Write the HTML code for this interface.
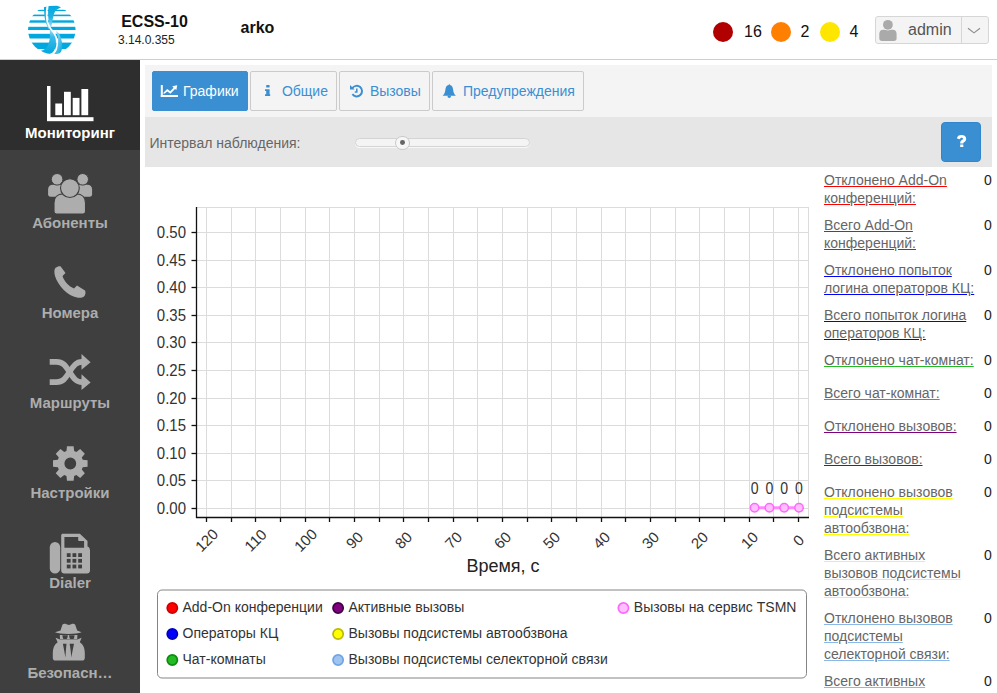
<!DOCTYPE html><html><head><meta charset="utf-8"><style>
*{box-sizing:border-box;margin:0;padding:0}
html,body{width:997px;height:693px;overflow:hidden;background:#fff;font-family:"Liberation Sans",sans-serif;color:#333}
.a{position:absolute;white-space:nowrap;line-height:1}
svg{position:absolute;overflow:visible}
.lbl{position:absolute;left:0;width:140px;text-align:center;font-size:15px;font-weight:bold;color:#adadad;line-height:1;white-space:nowrap}
.tab{position:absolute;top:71px;height:40px;border:1px solid #cbcbcb;background:#f4f4f4;border-radius:2px;color:#3a8fd3;font-size:14px}
.tab.act{background:#3a8fd3;border-color:#3a8fd3;color:#fff}
.tt{position:absolute;top:12px;line-height:1;white-space:nowrap}
.st{position:absolute;left:823px;font-size:14px;line-height:18px;color:#666;white-space:nowrap}
.st span{border-bottom:1px solid}
.sv{position:absolute;left:984px;font-size:14px;color:#222;line-height:1}
.lg{position:absolute;font-size:14px;line-height:1;color:#333;white-space:nowrap}
.dot{position:absolute;width:12px;height:12px;border-radius:50%;border:1.6px solid}
</style></head><body>
<div class="a" style="left:0;top:59px;width:997px;height:1px;background:#cecece"></div>
<svg style="left:0;top:0" width="100" height="60" viewBox="0 0 100 60"><defs><clipPath id="lc"><circle cx="51.8" cy="29.8" r="23.8"/></clipPath><linearGradient id="sg" x1="0" y1="0" x2="1" y2="0"><stop offset="0" stop-color="#00a8df"/><stop offset="0.6" stop-color="#7fd0ef"/><stop offset="1" stop-color="#00a8df"/></linearGradient></defs><g clip-path="url(#lc)" fill="#00a8df"><rect x="20" y="9.8" width="64" height="1.2"/><rect x="20" y="14.6" width="64" height="1.6"/><rect x="20" y="20.3" width="64" height="2.4"/><rect x="20" y="26.8" width="64" height="3.2"/><rect x="20" y="33.8" width="64" height="4.7"/><rect x="20" y="42.6" width="64" height="6.4"/><rect x="20" y="49" width="64" height="8" fill="#fff"/></g><linearGradient id="g1" x1="0" y1="0" x2="0" y2="1"><stop offset="0" stop-color="#00a8df"/><stop offset="0.55" stop-color="#22b2e3"/><stop offset="1" stop-color="#9fdcf3"/></linearGradient><linearGradient id="g2" x1="0" y1="0" x2="1" y2="1"><stop offset="0" stop-color="#c8ecf9"/><stop offset="0.5" stop-color="#5ec5ec"/><stop offset="1" stop-color="#00a8df"/></linearGradient><linearGradient id="g3" x1="0" y1="0" x2="0" y2="1"><stop offset="0" stop-color="#9fdcf3"/><stop offset="0.3" stop-color="#3cbbe8"/><stop offset="1" stop-color="#00a8df"/></linearGradient><path d="M48.6 6 L57 5.7 L61 7.3 L57 9.6 C55 11 53.6 14 53 18 C52.4 22 51.6 25 51.2 27 L49.6 26 C48.6 22 48.1 18 48.1 14 C48.1 10.5 48.3 8 48.6 6 Z" fill="url(#g1)"/><path d="M43.9 7.2 L47 6.5 C46.5 10 46.2 14 46.4 17 C46.7 21 47.8 24.5 50.2 28.5 L48.6 28.8 C46.5 25 45 21 44.6 17 C44.3 13 44 10 43.9 7.2 Z" fill="url(#g1)"/><path d="M49.6 29.5 L52.2 29.5 C54 31.5 55.2 34.5 55.7 38 C56.2 43 55.8 47.5 54.2 50.6 C53 52.5 51.5 53.5 50 53.8 C47 54 43.5 52.5 41 50.8 C43.5 50.2 46.5 48.5 47.9 45.5 C49.5 42 49.9 38 49.9 34 C49.9 32 49.8 30.5 49.6 29.5 Z" fill="url(#g3)"/><path d="M55.5 30.5 C57.5 32 59.2 33.5 60 35.5 C61.5 39 62.3 43 62.2 46.5 C62.1 49.5 61.5 51.5 60 53 C58 54 55.5 54 53.6 53.9 C55.6 52 57 49.5 57.6 46.5 C58.3 43 58.3 39.5 57.8 36.5 C57.4 34.2 56.6 32.2 55.5 30.5 Z" fill="url(#g2)"/><path d="M47.3 6.2 C46.6 10 46.3 14 46.8 18.5 C47.3 23 49 27 52 30.5 C55 34 56.8 37.5 57.2 42 C57.6 47 55.7 51 53 54.2" fill="none" stroke="#fff" stroke-width="1.7"/></svg>
<div class="a" style="left:121.2px;top:13.5px;font-size:16px;font-weight:bold;color:#111">ECSS-10</div>
<div class="a" style="left:118px;top:33.5px;font-size:12px;color:#222">3.14.0.355</div>
<div class="a" style="left:240.5px;top:19.5px;font-size:16px;font-weight:bold;color:#111">arko</div>
<div class="a" style="left:713px;top:22px;width:20px;height:20px;border-radius:50%;background:#b00000"></div>
<div class="a" style="left:771px;top:22px;width:20px;height:20px;border-radius:50%;background:#ff7f00"></div>
<div class="a" style="left:820px;top:22px;width:20px;height:20px;border-radius:50%;background:#ffe600"></div>
<div class="a" style="left:744px;top:23.5px;font-size:16px;color:#111">16</div>
<div class="a" style="left:800.5px;top:23.5px;font-size:16px;color:#111">2</div>
<div class="a" style="left:849.5px;top:23.5px;font-size:16px;color:#111">4</div>
<div class="a" style="left:875px;top:16px;width:114px;height:28px;border:1px solid #d6d6d6;border-radius:3px;background:#f4f4f4"></div>
<div class="a" style="left:961px;top:17px;width:1px;height:26px;background:#d6d6d6"></div>
<svg style="left:879px;top:19px" width="18" height="23" viewBox="0 0 18 23"><path d="M0.3 15 C0.3 12.3 1.5 10.7 4 10.7 L13.9 10.7 C16.4 10.7 17.6 12.3 17.6 15 L17.6 19.5 C17.6 21 16.6 21.9 15 21.9 L2.9 21.9 C1.3 21.9 0.3 21 0.3 19.5 Z" fill="#aaa"/><circle cx="8.9" cy="5.8" r="5.6" fill="#f4f4f4"/><circle cx="8.9" cy="5.8" r="4.9" fill="#aaa"/></svg>
<div class="a" style="left:908px;top:22px;font-size:16px;color:#555">admin</div>
<svg style="left:967px;top:27px" width="14" height="8" viewBox="0 0 14 8"><path d="M1 1.2 L7 5.9 L13 1.2" fill="none" stroke="#8c8c8c" stroke-width="1.1"/></svg>
<div class="a" style="left:0;top:60px;width:140px;height:633px;background:#3f3f3f"></div>
<div class="a" style="left:0;top:60px;width:140px;height:90px;background:#2e2e2e"></div>
<div class="lbl" style="top:125.4px;color:#fff">Мониторинг</div>
<div class="lbl" style="top:215.4px;color:#adadad">Абоненты</div>
<div class="lbl" style="top:305.4px;color:#adadad">Номера</div>
<div class="lbl" style="top:395.4px;color:#adadad">Маршруты</div>
<div class="lbl" style="top:485.4px;color:#adadad">Настройки</div>
<div class="lbl" style="top:575.4px;color:#adadad">Dialer</div>
<div class="lbl" style="top:665.4px;color:#adadad">Безопасн…</div>
<svg style="left:0;top:60px" width="140" height="90" viewBox="0 0 140 90"><rect x="47" y="26" width="3.5" height="35" fill="#fff"/><rect x="47" y="57.2" width="46.5" height="4" fill="#fff"/><rect x="55.3" y="43.5" width="6.8" height="11.7" fill="#fff"/><rect x="64" y="31.8" width="6.8" height="23.4" fill="#fff"/><rect x="72.7" y="37.9" width="6.8" height="17.3" fill="#fff"/><rect x="81.4" y="29" width="6.8" height="26.2" fill="#fff"/></svg>
<svg style="left:0;top:150px" width="140" height="90" viewBox="0 0 140 90" fill="#adadad"><path d="M48.1 43.5 L48.1 39.5 C48.1 36.5 49.8 34.7 53 34.7 L63 34.7 L63 46.7 L50.5 46.7 C49 46.7 48.1 45.8 48.1 44.3 Z"/><path d="M92.1 43.5 L92.1 39.5 C92.1 36.5 90.4 34.7 87.2 34.7 L77 34.7 L77 46.7 L89.7 46.7 C91.2 46.7 92.1 45.8 92.1 44.3 Z"/><circle cx="57.1" cy="29.3" r="5.8" stroke="#3f3f3f" stroke-width="1"/><circle cx="82.7" cy="29.3" r="5.8" stroke="#3f3f3f" stroke-width="1"/><path d="M54 61.5 L54 53 C54 47.5 57.5 43.9 63 43.9 L76.5 43.9 C82 43.9 85.5 47.5 85.5 53 L85.5 61.5 C85.5 63.2 84.5 64 83 64 L56.5 64 C55 64 54 63.2 54 61.5 Z" stroke="#3f3f3f" stroke-width="1.1"/><circle cx="69.9" cy="38.1" r="9.4" stroke="#3f3f3f" stroke-width="1.1"/></svg>
<svg style="left:0;top:240px" width="140" height="90" viewBox="0 0 140 90" fill="#adadad"><path d="M60.5 26.3 L65.5 33 L62.5 36 C64 41 69 46.5 74 48.5 L77 45.5 L85 50.5 C86 52 85.5 55 84 56.5 C82.5 57.8 80 58 77 57.6 C68 56 58 46 55 36 C54 32 54.2 29 55.6 27.8 C57 26.6 59 26 60.5 26.3 Z"/></svg>
<svg style="left:0;top:330px" width="140" height="90" viewBox="0 0 140 90"><path d="M49.7 31.9 L56.5 31.9 C63.5 31.9 65.5 36 69.5 42 C73.5 48 76 52.1 82 52.1 L83 52.1" fill="none" stroke="#adadad" stroke-width="5.6"/><path d="M49.7 52.1 L56.5 52.1 C63.5 52.1 65.5 48 69.5 42 C73.5 36 76 31.9 82 31.9 L83 31.9" fill="none" stroke="#adadad" stroke-width="5.6"/><path d="M81.5 23.9 L90.6 32.2 L81.5 39.7 Z" fill="#adadad"/><path d="M81.5 44.3 L90.6 52.4 L81.5 60 Z" fill="#adadad"/></svg>
<svg style="left:0;top:420px" width="140" height="90" viewBox="0 0 140 90"><path fill-rule="evenodd" fill="#adadad" d="M66.46 31.08 L66.98 26.22 L73.62 26.22 L74.14 31.08 L76.37 32.00 L80.17 28.93 L84.87 33.63 L81.80 37.43 L82.72 39.66 L87.58 40.18 L87.58 46.82 L82.72 47.34 L81.80 49.57 L84.87 53.37 L80.17 58.07 L76.37 55.00 L74.14 55.92 L73.62 60.78 L66.98 60.78 L66.46 55.92 L64.23 55.00 L60.43 58.07 L55.73 53.37 L58.80 49.57 L57.88 47.34 L53.02 46.82 L53.02 40.18 L57.88 39.66 L58.80 37.43 L55.73 33.63 L60.43 28.93 L64.23 32.00 Z M64.40 43.50 a5.9 5.9 0 1 0 11.8 0 a5.9 5.9 0 1 0 -11.8 0 Z"/></svg>
<svg style="left:0;top:510px" width="140" height="90" viewBox="0 0 140 90" fill="#adadad"><rect x="49.8" y="32.1" width="10.4" height="31.5" rx="5.2"/><path fill-rule="evenodd" d="M62.7 23.8 L79.9 23.8 L87.5 31.1 L87.5 36.4 C89.2 37 90 38.5 90 40.5 L90 60.6 C90 62.3 88.7 63.6 87 63.6 L64.2 63.6 C62.5 63.6 61.2 62.3 61.2 60.6 L61.2 25.3 C61.2 24.5 61.9 23.8 62.7 23.8 Z M64.4 26.9 L78.2 26.9 L78.2 30 C78.2 30.7 78.6 31.1 79.3 31.1 L84.1 31.1 L84.1 37.7 L64.4 37.7 Z"/><rect x="66.8" y="43.2" width="3.8" height="3.8" fill="#3f3f3f"/><rect x="72.5" y="43.2" width="3.8" height="3.8" fill="#3f3f3f"/><rect x="78.2" y="43.2" width="3.8" height="3.8" fill="#3f3f3f"/><rect x="66.8" y="48.9" width="3.8" height="3.8" fill="#3f3f3f"/><rect x="72.5" y="48.9" width="3.8" height="3.8" fill="#3f3f3f"/><rect x="78.2" y="48.9" width="3.8" height="3.8" fill="#3f3f3f"/><rect x="66.8" y="54.6" width="3.8" height="3.8" fill="#3f3f3f"/><rect x="72.5" y="54.6" width="3.8" height="3.8" fill="#3f3f3f"/><rect x="78.2" y="54.6" width="3.8" height="3.8" fill="#3f3f3f"/></svg>
<svg style="left:0;top:600px" width="140" height="90" viewBox="0 0 140 90" fill="#adadad"><path d="M55 32.2 L60.5 30.6 L62.4 24.8 C63.2 23.6 64.8 23.5 66.5 24.2 L68.8 25 L71.2 24.2 C72.9 23.5 74.5 23.6 75.2 24.8 L77.2 30.6 L81.6 32.2 C79 33.4 74 33.9 68.3 33.9 C62.5 33.9 57.6 33.4 55 32.2 Z"/><path d="M59.8 34.9 L77.4 34.9 L77.2 39.2 L60 39.2 Z"/><path d="M62.3 35.2 L67.9 35.2 L67.2 38.4 C66.6 39.1 63.6 39.1 63 38.4 Z M69 35.2 L74.6 35.2 L74 38.4 C73.4 39.1 70.4 39.1 69.7 38.4 Z" fill="#3f3f3f"/><path d="M55.6 37.8 L60 39.6 L77.2 39.6 L81.6 37.8 L79.8 42.2 C83.4 44.5 84.8 48.5 84.8 53 L84.8 58 C84.8 59.6 83.6 60.6 82 60.6 L55.6 60.6 C54 60.6 52.8 59.6 52.8 58 L52.8 53 C52.8 48.5 54.2 44.5 57.6 42.2 Z"/><path d="M62.9 43.8 L66.5 43.8 C66.1 47.5 65.8 52.5 65.4 57.4 C64.6 52.5 63.6 47.5 62.9 43.8 Z M69.6 43.8 L74 43.8 C73.3 47.5 72.2 52.5 71.3 57.4 C71 52.5 70.3 47.5 69.6 43.8 Z" fill="#3f3f3f"/></svg>
<div class="a" style="left:145px;top:65px;width:847px;height:52px;background:#f4f4f4"></div>
<div class="a" style="left:145px;top:117px;width:847px;height:50px;background:#e6e6e6"></div>
<div class="tab act" style="left:152px;width:96px"><div class="tt" style="left:30.0px">Графики</div></div>
<div class="tab " style="left:250px;width:87px"><div class="tt" style="left:30.9px">Общие</div></div>
<div class="tab " style="left:339px;width:91px"><div class="tt" style="left:29.9px">Вызовы</div></div>
<div class="tab " style="left:432px;width:152px"><div class="tt" style="left:29.9px">Предупреждения</div></div>
<svg style="left:160px;top:84px" width="20" height="14" viewBox="0 0 20 14" fill="#fff"><rect x="0.8" y="1" width="2" height="12"/><rect x="0.8" y="11" width="17.2" height="2"/><path d="M3.6 10.2 L3.6 8.4 L7.3 5 L10.2 7.3 L13.6 3.8 L12.2 2.2 L17.2 1.2 L16.4 6 L15 4.9 L10.4 9.7 L7.4 7.5 Z"/></svg>
<svg style="left:264px;top:84px" width="8" height="13" viewBox="0 0 8 13" fill="#3a8fd3"><rect x="2.2" y="1" width="3.4" height="2.6" rx="0.6"/><path d="M1 5.3 L5.6 5.3 L5.6 10.3 L6.2 10.3 L6.2 12 L1 12 L1 10.3 L2.2 10.3 L2.2 7 L1 7 Z"/></svg>
<svg style="left:349px;top:84px" width="15" height="14" viewBox="0 0 15 14"><path d="M3.4 10.2 A5.3 5.3 0 1 0 3.3 4.2" fill="none" stroke="#3a8fd3" stroke-width="2"/><path d="M1 1 L1 5.6 L5.6 5.6 Z" fill="#3a8fd3"/><path d="M7.8 4.6 L7.8 7.9 L5.8 7.9" fill="none" stroke="#3a8fd3" stroke-width="1.5"/></svg>
<svg style="left:442px;top:83px" width="15" height="16" viewBox="0 0 15 16" fill="#3a8fd3"><path d="M7.25 0.8 L7.9 1.9 C10 2.4 10.9 4 11.1 6.5 C11.4 9.8 12.4 11.4 13.9 12.8 L0.6 12.8 C2.1 11.4 3.1 9.8 3.4 6.5 C3.6 4 4.5 2.4 6.6 1.9 Z"/><path d="M5.6 12.5 L8.9 12.5 L8.9 13.5 C8.9 14.5 8.2 14.9 7.25 14.9 C6.3 14.9 5.6 14.5 5.6 13.5 Z"/></svg>
<div class="a" style="left:149.5px;top:136.2px;font-size:14px;color:#666">Интервал наблюдения:</div>
<div class="a" style="left:355px;top:138px;width:175px;height:9px;border:1px solid #d4d4d4;border-radius:5px;background:#f4f4f4;box-shadow:0 1px 0 rgba(255,255,255,0.7)"></div>
<div class="a" style="left:395px;top:135.5px;width:14.5px;height:14.5px;border:1px solid #c9c9c9;border-radius:50%;background:#f7f7f7"></div>
<div class="a" style="left:400px;top:140.2px;width:4.8px;height:4.8px;border-radius:50%;background:#666"></div>
<div class="a" style="left:941px;top:122px;width:40px;height:40px;border:1px solid #2f86cd;border-radius:4px;background:#3a8fd3"></div>
<svg style="left:955px;top:133px" width="14" height="16" viewBox="0 0 14 16" fill="#fff"><path d="M2 5.5 C2 3 4 2 6.5 2 C9.5 2 11.2 3.6 11.2 6 C11.2 8.2 9.6 8.8 8.7 9.4 C8.3 9.7 8.3 10 8.3 10.4 L5.2 10.4 C5.1 8.8 5.6 8 6.6 7.3 C7.6 6.6 8 6.4 8 5.8 C8 5.1 7.4 4.7 6.6 4.7 C5.6 4.7 5.1 5.2 4.9 6.3 Z M5.2 11.5 L8.3 11.5 L8.3 14 L5.2 14 Z"/></svg>
<svg style="left:0;top:0" width="997" height="693" viewBox="0 0 997 693"><line x1="196" y1="508.5" x2="809" y2="508.5" stroke="#dcdcdc" stroke-width="1"/><line x1="196" y1="480.5" x2="809" y2="480.5" stroke="#dcdcdc" stroke-width="1"/><line x1="196" y1="453.5" x2="809" y2="453.5" stroke="#dcdcdc" stroke-width="1"/><line x1="196" y1="425.5" x2="809" y2="425.5" stroke="#dcdcdc" stroke-width="1"/><line x1="196" y1="398.5" x2="809" y2="398.5" stroke="#dcdcdc" stroke-width="1"/><line x1="196" y1="370.5" x2="809" y2="370.5" stroke="#dcdcdc" stroke-width="1"/><line x1="196" y1="342.5" x2="809" y2="342.5" stroke="#dcdcdc" stroke-width="1"/><line x1="196" y1="315.5" x2="809" y2="315.5" stroke="#dcdcdc" stroke-width="1"/><line x1="196" y1="287.5" x2="809" y2="287.5" stroke="#dcdcdc" stroke-width="1"/><line x1="196" y1="260.5" x2="809" y2="260.5" stroke="#dcdcdc" stroke-width="1"/><line x1="196" y1="232.5" x2="809" y2="232.5" stroke="#dcdcdc" stroke-width="1"/><line x1="196" y1="207.5" x2="809" y2="207.5" stroke="#dcdcdc" stroke-width="1"/><line x1="206.5" y1="207" x2="206.5" y2="517" stroke="#dcdcdc" stroke-width="1"/><line x1="231.5" y1="207" x2="231.5" y2="517" stroke="#dcdcdc" stroke-width="1"/><line x1="255.5" y1="207" x2="255.5" y2="517" stroke="#dcdcdc" stroke-width="1"/><line x1="280.5" y1="207" x2="280.5" y2="517" stroke="#dcdcdc" stroke-width="1"/><line x1="305.5" y1="207" x2="305.5" y2="517" stroke="#dcdcdc" stroke-width="1"/><line x1="329.5" y1="207" x2="329.5" y2="517" stroke="#dcdcdc" stroke-width="1"/><line x1="354.5" y1="207" x2="354.5" y2="517" stroke="#dcdcdc" stroke-width="1"/><line x1="379.5" y1="207" x2="379.5" y2="517" stroke="#dcdcdc" stroke-width="1"/><line x1="403.5" y1="207" x2="403.5" y2="517" stroke="#dcdcdc" stroke-width="1"/><line x1="428.5" y1="207" x2="428.5" y2="517" stroke="#dcdcdc" stroke-width="1"/><line x1="453.5" y1="207" x2="453.5" y2="517" stroke="#dcdcdc" stroke-width="1"/><line x1="477.5" y1="207" x2="477.5" y2="517" stroke="#dcdcdc" stroke-width="1"/><line x1="502.5" y1="207" x2="502.5" y2="517" stroke="#dcdcdc" stroke-width="1"/><line x1="527.5" y1="207" x2="527.5" y2="517" stroke="#dcdcdc" stroke-width="1"/><line x1="551.5" y1="207" x2="551.5" y2="517" stroke="#dcdcdc" stroke-width="1"/><line x1="576.5" y1="207" x2="576.5" y2="517" stroke="#dcdcdc" stroke-width="1"/><line x1="601.5" y1="207" x2="601.5" y2="517" stroke="#dcdcdc" stroke-width="1"/><line x1="625.5" y1="207" x2="625.5" y2="517" stroke="#dcdcdc" stroke-width="1"/><line x1="650.5" y1="207" x2="650.5" y2="517" stroke="#dcdcdc" stroke-width="1"/><line x1="675.5" y1="207" x2="675.5" y2="517" stroke="#dcdcdc" stroke-width="1"/><line x1="699.5" y1="207" x2="699.5" y2="517" stroke="#dcdcdc" stroke-width="1"/><line x1="724.5" y1="207" x2="724.5" y2="517" stroke="#dcdcdc" stroke-width="1"/><line x1="749.5" y1="207" x2="749.5" y2="517" stroke="#dcdcdc" stroke-width="1"/><line x1="773.5" y1="207" x2="773.5" y2="517" stroke="#dcdcdc" stroke-width="1"/><line x1="798.5" y1="207" x2="798.5" y2="517" stroke="#dcdcdc" stroke-width="1"/><line x1="808.5" y1="207" x2="808.5" y2="517" stroke="#dcdcdc" stroke-width="1"/><line x1="196.5" y1="207" x2="196.5" y2="518" stroke="#111" stroke-width="1.3"/><line x1="196" y1="517.5" x2="809" y2="517.5" stroke="#111" stroke-width="1.3"/><line x1="191.5" y1="508.5" x2="196.5" y2="508.5" stroke="#111" stroke-width="1.3"/><text transform="translate(186,513.8) scale(1,1.1)" font-size="15" text-anchor="end" fill="#333" font-family="Liberation Sans">0.00</text><line x1="191.5" y1="480.5" x2="196.5" y2="480.5" stroke="#111" stroke-width="1.3"/><text transform="translate(186,485.8) scale(1,1.1)" font-size="15" text-anchor="end" fill="#333" font-family="Liberation Sans">0.05</text><line x1="191.5" y1="453.5" x2="196.5" y2="453.5" stroke="#111" stroke-width="1.3"/><text transform="translate(186,458.8) scale(1,1.1)" font-size="15" text-anchor="end" fill="#333" font-family="Liberation Sans">0.10</text><line x1="191.5" y1="425.5" x2="196.5" y2="425.5" stroke="#111" stroke-width="1.3"/><text transform="translate(186,430.8) scale(1,1.1)" font-size="15" text-anchor="end" fill="#333" font-family="Liberation Sans">0.15</text><line x1="191.5" y1="398.5" x2="196.5" y2="398.5" stroke="#111" stroke-width="1.3"/><text transform="translate(186,403.8) scale(1,1.1)" font-size="15" text-anchor="end" fill="#333" font-family="Liberation Sans">0.20</text><line x1="191.5" y1="370.5" x2="196.5" y2="370.5" stroke="#111" stroke-width="1.3"/><text transform="translate(186,375.8) scale(1,1.1)" font-size="15" text-anchor="end" fill="#333" font-family="Liberation Sans">0.25</text><line x1="191.5" y1="342.5" x2="196.5" y2="342.5" stroke="#111" stroke-width="1.3"/><text transform="translate(186,347.8) scale(1,1.1)" font-size="15" text-anchor="end" fill="#333" font-family="Liberation Sans">0.30</text><line x1="191.5" y1="315.5" x2="196.5" y2="315.5" stroke="#111" stroke-width="1.3"/><text transform="translate(186,320.8) scale(1,1.1)" font-size="15" text-anchor="end" fill="#333" font-family="Liberation Sans">0.35</text><line x1="191.5" y1="287.5" x2="196.5" y2="287.5" stroke="#111" stroke-width="1.3"/><text transform="translate(186,292.8) scale(1,1.1)" font-size="15" text-anchor="end" fill="#333" font-family="Liberation Sans">0.40</text><line x1="191.5" y1="260.5" x2="196.5" y2="260.5" stroke="#111" stroke-width="1.3"/><text transform="translate(186,265.8) scale(1,1.1)" font-size="15" text-anchor="end" fill="#333" font-family="Liberation Sans">0.45</text><line x1="191.5" y1="232.5" x2="196.5" y2="232.5" stroke="#111" stroke-width="1.3"/><text transform="translate(186,237.8) scale(1,1.1)" font-size="15" text-anchor="end" fill="#333" font-family="Liberation Sans">0.50</text><line x1="206.5" y1="517" x2="206.5" y2="522" stroke="#111" stroke-width="1.3"/><text transform="translate(206.5,540.2) rotate(-45)" y="5.3" font-size="15" text-anchor="middle" fill="#333" font-family="Liberation Sans">120</text><line x1="231.5" y1="517" x2="231.5" y2="522" stroke="#111" stroke-width="1.3"/><line x1="255.5" y1="517" x2="255.5" y2="522" stroke="#111" stroke-width="1.3"/><text transform="translate(255.5,540.2) rotate(-45)" y="5.3" font-size="15" text-anchor="middle" fill="#333" font-family="Liberation Sans">110</text><line x1="280.5" y1="517" x2="280.5" y2="522" stroke="#111" stroke-width="1.3"/><line x1="305.5" y1="517" x2="305.5" y2="522" stroke="#111" stroke-width="1.3"/><text transform="translate(305.5,540.2) rotate(-45)" y="5.3" font-size="15" text-anchor="middle" fill="#333" font-family="Liberation Sans">100</text><line x1="329.5" y1="517" x2="329.5" y2="522" stroke="#111" stroke-width="1.3"/><line x1="354.5" y1="517" x2="354.5" y2="522" stroke="#111" stroke-width="1.3"/><text transform="translate(354.5,540.2) rotate(-45)" y="5.3" font-size="15" text-anchor="middle" fill="#333" font-family="Liberation Sans">90</text><line x1="379.5" y1="517" x2="379.5" y2="522" stroke="#111" stroke-width="1.3"/><line x1="403.5" y1="517" x2="403.5" y2="522" stroke="#111" stroke-width="1.3"/><text transform="translate(403.5,540.2) rotate(-45)" y="5.3" font-size="15" text-anchor="middle" fill="#333" font-family="Liberation Sans">80</text><line x1="428.5" y1="517" x2="428.5" y2="522" stroke="#111" stroke-width="1.3"/><line x1="453.5" y1="517" x2="453.5" y2="522" stroke="#111" stroke-width="1.3"/><text transform="translate(453.5,540.2) rotate(-45)" y="5.3" font-size="15" text-anchor="middle" fill="#333" font-family="Liberation Sans">70</text><line x1="477.5" y1="517" x2="477.5" y2="522" stroke="#111" stroke-width="1.3"/><line x1="502.5" y1="517" x2="502.5" y2="522" stroke="#111" stroke-width="1.3"/><text transform="translate(502.5,540.2) rotate(-45)" y="5.3" font-size="15" text-anchor="middle" fill="#333" font-family="Liberation Sans">60</text><line x1="527.5" y1="517" x2="527.5" y2="522" stroke="#111" stroke-width="1.3"/><line x1="551.5" y1="517" x2="551.5" y2="522" stroke="#111" stroke-width="1.3"/><text transform="translate(551.5,540.2) rotate(-45)" y="5.3" font-size="15" text-anchor="middle" fill="#333" font-family="Liberation Sans">50</text><line x1="576.5" y1="517" x2="576.5" y2="522" stroke="#111" stroke-width="1.3"/><line x1="601.5" y1="517" x2="601.5" y2="522" stroke="#111" stroke-width="1.3"/><text transform="translate(601.5,540.2) rotate(-45)" y="5.3" font-size="15" text-anchor="middle" fill="#333" font-family="Liberation Sans">40</text><line x1="625.5" y1="517" x2="625.5" y2="522" stroke="#111" stroke-width="1.3"/><line x1="650.5" y1="517" x2="650.5" y2="522" stroke="#111" stroke-width="1.3"/><text transform="translate(650.5,540.2) rotate(-45)" y="5.3" font-size="15" text-anchor="middle" fill="#333" font-family="Liberation Sans">30</text><line x1="675.5" y1="517" x2="675.5" y2="522" stroke="#111" stroke-width="1.3"/><line x1="699.5" y1="517" x2="699.5" y2="522" stroke="#111" stroke-width="1.3"/><text transform="translate(699.5,540.2) rotate(-45)" y="5.3" font-size="15" text-anchor="middle" fill="#333" font-family="Liberation Sans">20</text><line x1="724.5" y1="517" x2="724.5" y2="522" stroke="#111" stroke-width="1.3"/><line x1="749.5" y1="517" x2="749.5" y2="522" stroke="#111" stroke-width="1.3"/><text transform="translate(749.5,540.2) rotate(-45)" y="5.3" font-size="15" text-anchor="middle" fill="#333" font-family="Liberation Sans">10</text><line x1="773.5" y1="517" x2="773.5" y2="522" stroke="#111" stroke-width="1.3"/><line x1="798.5" y1="517" x2="798.5" y2="522" stroke="#111" stroke-width="1.3"/><text transform="translate(798.5,540.2) rotate(-45)" y="5.3" font-size="15" text-anchor="middle" fill="#333" font-family="Liberation Sans">0</text><text x="503" y="571.5" font-size="18" text-anchor="middle" fill="#222" font-family="Liberation Sans">Время, с</text><polyline points="754.6,507.7 769.4,507.7 784.2,507.7 799.0,507.7" fill="none" stroke="#ff88ff" stroke-width="3"/><circle cx="754.6" cy="507.7" r="4.2" fill="#ffc0ff" stroke="#ff66ff" stroke-width="1.5"/><text transform="translate(754.6,493.7) scale(0.94,1.12)" font-size="15" text-anchor="middle" fill="#333" font-family="Liberation Sans">0</text><circle cx="769.4" cy="507.7" r="4.2" fill="#ffc0ff" stroke="#ff66ff" stroke-width="1.5"/><text transform="translate(769.4,493.7) scale(0.94,1.12)" font-size="15" text-anchor="middle" fill="#333" font-family="Liberation Sans">0</text><circle cx="784.2" cy="507.7" r="4.2" fill="#ffc0ff" stroke="#ff66ff" stroke-width="1.5"/><text transform="translate(784.2,493.7) scale(0.94,1.12)" font-size="15" text-anchor="middle" fill="#333" font-family="Liberation Sans">0</text><circle cx="799.0" cy="507.7" r="4.2" fill="#ffc0ff" stroke="#ff66ff" stroke-width="1.5"/><text transform="translate(799.0,493.7) scale(0.94,1.12)" font-size="15" text-anchor="middle" fill="#333" font-family="Liberation Sans">0</text></svg>
<svg style="left:0;top:0" width="997" height="693" viewBox="0 0 997 693"><rect x="157.5" y="590" width="649" height="88" rx="4.5" fill="none" stroke="#858585" stroke-width="1"/></svg>
<div class="lg" style="left:182.5px;top:599.7px">Add-On конференции</div>
<div class="lg" style="left:182.5px;top:625.7px">Операторы КЦ</div>
<div class="lg" style="left:182.5px;top:651.7px">Чат-комнаты</div>
<div class="lg" style="left:348.5px;top:599.7px">Активные вызовы</div>
<div class="lg" style="left:348.5px;top:625.7px">Вызовы подсистемы автообзвона</div>
<div class="lg" style="left:348.5px;top:651.7px">Вызовы подсистемы селекторной связи</div>
<div class="lg" style="left:633.8px;top:599.7px">Вызовы на сервис TSMN</div>
<svg style="left:0;top:0" width="997" height="693" viewBox="0 0 997 693"><circle cx="172.3" cy="608.0" r="5.1" fill="#ff0000" stroke="#cc0000" stroke-width="1.7"/><circle cx="172.3" cy="634.0" r="5.1" fill="#0000ff" stroke="#0000bb" stroke-width="1.7"/><circle cx="172.3" cy="660.0" r="5.1" fill="#22bb22" stroke="#118811" stroke-width="1.7"/><circle cx="338.1" cy="608.0" r="5.1" fill="#800080" stroke="#400040" stroke-width="1.7"/><circle cx="338.1" cy="634.0" r="5.1" fill="#ffff00" stroke="#bbbb00" stroke-width="1.7"/><circle cx="338.1" cy="660.0" r="5.1" fill="#a0c4f0" stroke="#6ea4e6" stroke-width="1.7"/><circle cx="623.4" cy="608.0" r="5.1" fill="#ffc0ff" stroke="#ff66ff" stroke-width="1.7"/></svg>
<div class="a" style="left:824px;top:172.7px;font-size:14px;color:#666;text-decoration:underline;text-decoration-color:#ff0000">Отклонено Add-On</div>
<div class="a" style="left:824px;top:190.7px;font-size:14px;color:#666;text-decoration:underline;text-decoration-color:#ff0000">конференций:</div>
<div class="sv" style="top:172.7px">0</div>
<div class="a" style="left:824px;top:217.8px;font-size:14px;color:#666;text-decoration:underline;text-decoration-color:#ff0000">Всего Add-On</div>
<div class="a" style="left:824px;top:235.8px;font-size:14px;color:#666;text-decoration:underline;text-decoration-color:#ff0000">конференций:</div>
<div class="sv" style="top:217.8px">0</div>
<div class="a" style="left:824px;top:262.7px;font-size:14px;color:#666;text-decoration:underline;text-decoration-color:#0000ff">Отклонено попыток</div>
<div class="a" style="left:824px;top:280.7px;font-size:14px;color:#666;text-decoration:underline;text-decoration-color:#0000ff">логина операторов КЦ:</div>
<div class="sv" style="top:262.7px">0</div>
<div class="a" style="left:824px;top:307.8px;font-size:14px;color:#666;text-decoration:underline;text-decoration-color:#0000ff">Всего попыток логина</div>
<div class="a" style="left:824px;top:325.8px;font-size:14px;color:#666;text-decoration:underline;text-decoration-color:#0000ff">операторов КЦ:</div>
<div class="sv" style="top:307.8px">0</div>
<div class="a" style="left:824px;top:352.7px;font-size:14px;color:#666;text-decoration:underline;text-decoration-color:#22bb22">Отклонено чат-комнат:</div>
<div class="sv" style="top:352.7px">0</div>
<div class="a" style="left:824px;top:385.7px;font-size:14px;color:#666;text-decoration:underline;text-decoration-color:#22bb22">Всего чат-комнат:</div>
<div class="sv" style="top:385.7px">0</div>
<div class="a" style="left:824px;top:418.7px;font-size:14px;color:#666;text-decoration:underline;text-decoration-color:#800080">Отклонено вызовов:</div>
<div class="sv" style="top:418.7px">0</div>
<div class="a" style="left:824px;top:451.7px;font-size:14px;color:#666;text-decoration:underline;text-decoration-color:#800080">Всего вызовов:</div>
<div class="sv" style="top:451.7px">0</div>
<div class="a" style="left:824px;top:484.7px;font-size:14px;color:#666;text-decoration:underline;text-decoration-color:#ffff00">Отклонено вызовов</div>
<div class="a" style="left:824px;top:502.7px;font-size:14px;color:#666;text-decoration:underline;text-decoration-color:#ffff00">подсистемы</div>
<div class="a" style="left:824px;top:520.7px;font-size:14px;color:#666;text-decoration:underline;text-decoration-color:#ffff00">автообзвона:</div>
<div class="sv" style="top:484.7px">0</div>
<div class="a" style="left:824px;top:547.7px;font-size:14px;color:#666;text-decoration:underline;text-decoration-color:#ffff00">Всего активных</div>
<div class="a" style="left:824px;top:565.7px;font-size:14px;color:#666;text-decoration:underline;text-decoration-color:#ffff00">вызовов подсистемы</div>
<div class="a" style="left:824px;top:583.7px;font-size:14px;color:#666;text-decoration:underline;text-decoration-color:#ffff00">автообзвона:</div>
<div class="sv" style="top:547.7px">0</div>
<div class="a" style="left:824px;top:610.7px;font-size:14px;color:#666;text-decoration:underline;text-decoration-color:#8ab8e8">Отклонено вызовов</div>
<div class="a" style="left:824px;top:628.7px;font-size:14px;color:#666;text-decoration:underline;text-decoration-color:#8ab8e8">подсистемы</div>
<div class="a" style="left:824px;top:646.7px;font-size:14px;color:#666;text-decoration:underline;text-decoration-color:#8ab8e8">селекторной связи:</div>
<div class="sv" style="top:610.7px">0</div>
<div class="a" style="left:824px;top:673.7px;font-size:14px;color:#666;text-decoration:underline;text-decoration-color:#8ab8e8">Всего активных</div>
<div class="a" style="left:824px;top:691.7px;font-size:14px;color:#666;text-decoration:underline;text-decoration-color:#8ab8e8">вызовов подсистемы</div>
<div class="a" style="left:824px;top:709.7px;font-size:14px;color:#666;text-decoration:underline;text-decoration-color:#8ab8e8">селекторной связи:</div>
<div class="sv" style="top:673.7px">0</div>
</body></html>
